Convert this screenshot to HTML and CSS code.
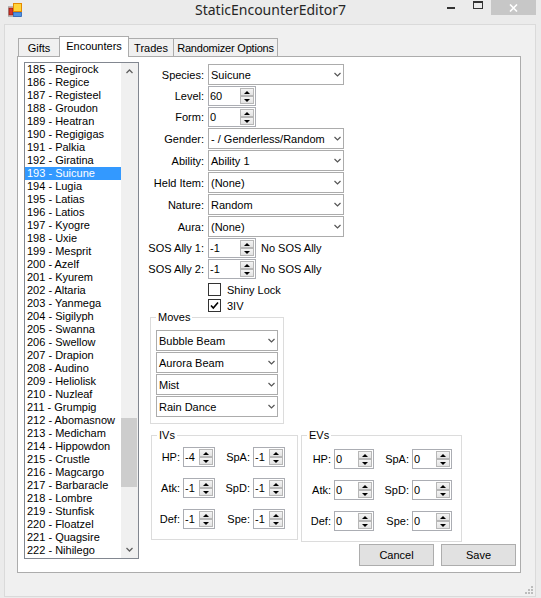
FILE: index.html
```html
<!DOCTYPE html>
<html>
<head>
<meta charset="utf-8">
<title>StaticEncounterEditor7</title>
<link rel="stylesheet" href="styles.css">
</head>
<body>
<div class="window">
  <div class="titlebar">
    <svg class="appicon" width="14" height="14" viewBox="0 0 14 14">
      <rect x="0.5" y="3.5" width="12" height="10" fill="#e9e9e9" stroke="#b5b5b5"/>
      <rect x="1" y="5" width="4" height="7" fill="#d8352a" stroke="#8d1e16" stroke-width="0.8"/>
      <rect x="5.5" y="0.5" width="8" height="8" fill="#ffd43a" stroke="#e58a00"/>
      <rect x="5.5" y="9.5" width="8" height="4" fill="#4f92e3" stroke="#2b62b3" stroke-width="0.8"/>
    </svg>
    <div class="title">StaticEncounterEditor7</div>
    <div class="controls">
      <span class="min"></span>
      <span class="max"></span>
      <span class="close"><svg width="9" height="8" viewBox="0 0 9 8"><path d="M1 0.5 L8 7.5 M8 0.5 L1 7.5" stroke="#fff" stroke-width="1.6"/></svg></span>
    </div>
  </div>

  <div class="client">
    <div class="tabs">
      <div class="tab t-gifts">Gifts</div>
      <div class="tab t-enc active">Encounters</div>
      <div class="tab t-trades">Trades</div>
      <div class="tab t-rand">Randomizer Options</div>
    </div>

    <div class="page">
      <div class="listbox">
        <div class="items">
          <div class="item">185 - Regirock</div>
          <div class="item">186 - Regice</div>
          <div class="item">187 - Registeel</div>
          <div class="item">188 - Groudon</div>
          <div class="item">189 - Heatran</div>
          <div class="item">190 - Regigigas</div>
          <div class="item">191 - Palkia</div>
          <div class="item">192 - Giratina</div>
          <div class="item sel">193 - Suicune</div>
          <div class="item">194 - Lugia</div>
          <div class="item">195 - Latias</div>
          <div class="item">196 - Latios</div>
          <div class="item">197 - Kyogre</div>
          <div class="item">198 - Uxie</div>
          <div class="item">199 - Mesprit</div>
          <div class="item">200 - Azelf</div>
          <div class="item">201 - Kyurem</div>
          <div class="item">202 - Altaria</div>
          <div class="item">203 - Yanmega</div>
          <div class="item">204 - Sigilyph</div>
          <div class="item">205 - Swanna</div>
          <div class="item">206 - Swellow</div>
          <div class="item">207 - Drapion</div>
          <div class="item">208 - Audino</div>
          <div class="item">209 - Heliolisk</div>
          <div class="item">210 - Nuzleaf</div>
          <div class="item">211 - Grumpig</div>
          <div class="item">212 - Abomasnow</div>
          <div class="item">213 - Medicham</div>
          <div class="item">214 - Hippowdon</div>
          <div class="item">215 - Crustle</div>
          <div class="item">216 - Magcargo</div>
          <div class="item">217 - Barbaracle</div>
          <div class="item">218 - Lombre</div>
          <div class="item">219 - Stunfisk</div>
          <div class="item">220 - Floatzel</div>
          <div class="item">221 - Quagsire</div>
          <div class="item">222 - Nihilego</div>
        </div>
        <div class="vscroll">
          <div class="sb-btn"><svg width="7" height="5" viewBox="0 0 7 5"><path d="M0.5 4 L3.5 1 L6.5 4" fill="none" stroke="#606060" stroke-width="1.3"/></svg></div>
          <div class="sb-track"><div class="sb-thumb"></div></div>
          <div class="sb-btn"><svg width="7" height="5" viewBox="0 0 7 5"><path d="M0.5 1 L3.5 4 L6.5 1" fill="none" stroke="#606060" stroke-width="1.3"/></svg></div>
        </div>
      </div>

      <div class="form">
        <div class="fields">
          <span class="lbl">Species:</span>
          <div class="combo w136"><span>Suicune</span><svg class="chev" width="7" height="5" viewBox="0 0 7 5"><path d="M0.5 1 L3.5 4 L6.5 1" fill="none" stroke="#555" stroke-width="1.2"/></svg></div>

          <span class="lbl">Level:</span>
          <div class="num w48"><span class="v">60</span><span class="spin"><b class="up"></b><b class="dn"></b></span></div>

          <span class="lbl">Form:</span>
          <div class="num w48"><span class="v">0</span><span class="spin"><b class="up"></b><b class="dn"></b></span></div>

          <span class="lbl">Gender:</span>
          <div class="combo w136"><span>- / Genderless/Random</span><svg class="chev" width="7" height="5" viewBox="0 0 7 5"><path d="M0.5 1 L3.5 4 L6.5 1" fill="none" stroke="#555" stroke-width="1.2"/></svg></div>

          <span class="lbl">Ability:</span>
          <div class="combo w136"><span>Ability 1</span><svg class="chev" width="7" height="5" viewBox="0 0 7 5"><path d="M0.5 1 L3.5 4 L6.5 1" fill="none" stroke="#555" stroke-width="1.2"/></svg></div>

          <span class="lbl">Held Item:</span>
          <div class="combo w136"><span>(None)</span><svg class="chev" width="7" height="5" viewBox="0 0 7 5"><path d="M0.5 1 L3.5 4 L6.5 1" fill="none" stroke="#555" stroke-width="1.2"/></svg></div>

          <span class="lbl">Nature:</span>
          <div class="combo w136"><span>Random</span><svg class="chev" width="7" height="5" viewBox="0 0 7 5"><path d="M0.5 1 L3.5 4 L6.5 1" fill="none" stroke="#555" stroke-width="1.2"/></svg></div>

          <span class="lbl">Aura:</span>
          <div class="combo w136"><span>(None)</span><svg class="chev" width="7" height="5" viewBox="0 0 7 5"><path d="M0.5 1 L3.5 4 L6.5 1" fill="none" stroke="#555" stroke-width="1.2"/></svg></div>

          <span class="lbl">SOS Ally 1:</span>
          <div class="sos"><div class="num w48"><span class="v">-1</span><span class="spin"><b class="up"></b><b class="dn"></b></span></div><span>No SOS Ally</span></div>

          <span class="lbl">SOS Ally 2:</span>
          <div class="sos"><div class="num w48"><span class="v">-1</span><span class="spin"><b class="up"></b><b class="dn"></b></span></div><span>No SOS Ally</span></div>

          <div class="check first"><span class="box"></span>Shiny Lock</div>
          <div class="check second"><span class="box"><svg width="11" height="11" viewBox="0 0 11 11"><path d="M2 5.5 L4.3 8 L9 2.5" fill="none" stroke="#000" stroke-width="1.6"/></svg></span>3IV</div>
        </div>

        <fieldset class="grp moves">
          <legend>Moves</legend>
          <div class="mlist">
            <div class="combo"><span>Bubble Beam</span><svg class="chev" width="7" height="5" viewBox="0 0 7 5"><path d="M0.5 1 L3.5 4 L6.5 1" fill="none" stroke="#555" stroke-width="1.2"/></svg></div>
            <div class="combo"><span>Aurora Beam</span><svg class="chev" width="7" height="5" viewBox="0 0 7 5"><path d="M0.5 1 L3.5 4 L6.5 1" fill="none" stroke="#555" stroke-width="1.2"/></svg></div>
            <div class="combo"><span>Mist</span><svg class="chev" width="7" height="5" viewBox="0 0 7 5"><path d="M0.5 1 L3.5 4 L6.5 1" fill="none" stroke="#555" stroke-width="1.2"/></svg></div>
            <div class="combo"><span>Rain Dance</span><svg class="chev" width="7" height="5" viewBox="0 0 7 5"><path d="M0.5 1 L3.5 4 L6.5 1" fill="none" stroke="#555" stroke-width="1.2"/></svg></div>
          </div>
        </fieldset>

        <div class="stats">
          <fieldset class="grp ivs">
            <legend>IVs</legend>
            <div class="statgrid">
              <span class="sl">HP:</span><div class="num"><span class="v">-4</span><span class="spin"><b class="up"></b><b class="dn"></b></span></div>
              <span class="sl">SpA:</span><div class="num"><span class="v">-1</span><span class="spin"><b class="up"></b><b class="dn"></b></span></div>
              <span class="sl">Atk:</span><div class="num"><span class="v">-1</span><span class="spin"><b class="up"></b><b class="dn"></b></span></div>
              <span class="sl">SpD:</span><div class="num"><span class="v">-1</span><span class="spin"><b class="up"></b><b class="dn"></b></span></div>
              <span class="sl">Def:</span><div class="num"><span class="v">-1</span><span class="spin"><b class="up"></b><b class="dn"></b></span></div>
              <span class="sl">Spe:</span><div class="num"><span class="v">-1</span><span class="spin"><b class="up"></b><b class="dn"></b></span></div>
            </div>
          </fieldset>
          <fieldset class="grp evs">
            <legend>EVs</legend>
            <div class="statgrid">
              <span class="sl">HP:</span><div class="num"><span class="v">0</span><span class="spin"><b class="up"></b><b class="dn"></b></span></div>
              <span class="sl">SpA:</span><div class="num"><span class="v">0</span><span class="spin"><b class="up"></b><b class="dn"></b></span></div>
              <span class="sl">Atk:</span><div class="num"><span class="v">0</span><span class="spin"><b class="up"></b><b class="dn"></b></span></div>
              <span class="sl">SpD:</span><div class="num"><span class="v">0</span><span class="spin"><b class="up"></b><b class="dn"></b></span></div>
              <span class="sl">Def:</span><div class="num"><span class="v">0</span><span class="spin"><b class="up"></b><b class="dn"></b></span></div>
              <span class="sl">Spe:</span><div class="num"><span class="v">0</span><span class="spin"><b class="up"></b><b class="dn"></b></span></div>
            </div>
          </fieldset>
        </div>

        <div class="buttons">
          <div class="btn">Cancel</div>
          <div class="btn">Save</div>
        </div>
      </div>
    </div>

    <svg class="grip" width="8" height="8" viewBox="0 0 8 8">
      <rect x="6" y="0" width="2" height="2" fill="#bcbcbc"/>
      <rect x="3" y="3" width="2" height="2" fill="#bcbcbc"/>
      <rect x="6" y="3" width="2" height="2" fill="#bcbcbc"/>
      <rect x="0" y="6" width="2" height="2" fill="#bcbcbc"/>
      <rect x="3" y="6" width="2" height="2" fill="#bcbcbc"/>
      <rect x="6" y="6" width="2" height="2" fill="#bcbcbc"/>
    </svg>
  </div>
</div>
</body>
</html>
```

FILE: styles.css
```css
* { box-sizing: border-box; }
html, body { margin: 0; padding: 0; }
body {
  width: 541px;
  height: 598px;
  overflow: hidden;
  background: #ebebeb;
  font-family: "Liberation Sans", Arial, sans-serif;
  font-size: 11px;
  color: #000;
}
.window { display: flex; flex-direction: column; height: 598px; }

/* title bar */
.titlebar {
  height: 24px;
  flex: none;
  display: grid;
  grid-template-columns: 1fr auto 1fr;
  align-items: start;
}
.appicon { margin: 3px 0 0 8px; display: block; }
.title {
  font-family: "Noto Sans", sans-serif;
  font-size: 14px;
  line-height: 19px;
  color: #262626;
}
.controls { display: flex; justify-content: flex-end; align-items: flex-start; padding-right: 5px; }
.min { width: 8px; height: 2px; background: #333; margin-top: 7px; }
.max { width: 10px; height: 8px; border: 1px solid #333; border-top-width: 2px; margin: 1px 0 0 18px; }
.close {
  width: 45px; height: 15px; margin-left: 8px;
  background: #c7c7c7;
  display: flex; align-items: center; justify-content: center;
}

/* client */
.client {
  position: relative;
  margin: 0 5px 0 4px;
  height: 573px;
  border: 1px solid #dadada;
  background: #f0f0f0;
  padding: 11px 0 0 12px;
}
.grip { position: absolute; right: 2px; bottom: 2px; }

/* tabs */
.tabs { display: flex; align-items: flex-end; height: 20px; padding-left: 1px; }
.tab {
  height: 18px;
  border: 1px solid #acacac;
  border-bottom: 0;
  margin-right: -1px;
  background: #f0f0f0;
  display: flex; align-items: center; justify-content: center;
  white-space: nowrap;
}
.tab.active {
  height: 21px;
  margin-bottom: -1px;
  background: #fff;
  position: relative;
  z-index: 1;
  padding-bottom: 2px;
}
.t-gifts { width: 42px; }
.t-enc { width: 70px; }
.t-trades { width: 46px; }
.t-rand { width: 105px; letter-spacing: -0.2px; }

/* page */
.page {
  width: 504px;
  height: 517px;
  border: 1px solid #acacac;
  background: #fff;
  display: flex;
  align-items: flex-start;
  padding: 5px 0 0 6px;
}

/* listbox */
.listbox {
  flex: none;
  width: 115px;
  height: 497px;
  border: 1px solid #828790;
  display: flex;
  overflow: hidden;
}
.items { flex: 1; min-width: 0; }
.item { height: 13px; line-height: 13px; padding-left: 2px; white-space: nowrap; }
.item.sel { background: #3399ff; color: #fff; }
.vscroll { width: 17px; flex: none; background: #f0f0f0; display: flex; flex-direction: column; }
.sb-btn { height: 17px; flex: none; display: flex; align-items: center; justify-content: center; }
.sb-track { flex: 1; }
.sb-thumb { margin: 338px 1px 0 0; height: 69px; background: #cdcdcd; }

/* form */
.form { flex: none; width: 370px; margin: 2px 0 0 7px; display: flex; flex-direction: column; }
.fields {
  display: grid;
  grid-template-columns: 58px auto;
  column-gap: 4px;
  row-gap: 1px;
  align-items: center;
  justify-items: start;
}
.lbl { justify-self: end; white-space: nowrap; }

.combo {
  display: flex;
  align-items: center;
  justify-content: space-between;
  height: 21px;
  border: 1px solid #acacac;
  background: #fff;
  padding: 0 2px 0 2px;
  white-space: nowrap;
}
.w136 { width: 136px; }
.chev { display: block; flex: none; }

.num {
  display: flex;
  align-items: center;
  height: 20px;
  border: 1px solid #abadb3;
  background: #fff;
  padding-left: 1px;
}
.w48 { width: 48px; }
.num .v { flex: 1; white-space: nowrap; }
.spin { width: 14px; height: 16px; margin-right: 1px; display: flex; flex-direction: column; flex: none; }
.spin b {
  flex: 1;
  border: 1px solid #b7b7b7;
  background: linear-gradient(#f4f4f4, #e3e3e3);
  display: flex; align-items: center; justify-content: center;
}
.spin b::after { content: ""; width: 0; height: 0; border-left: 3px solid transparent; border-right: 3px solid transparent; }
.spin .up::after { border-bottom: 3px solid #000; }
.spin .dn::after { border-top: 3px solid #000; }

.sos { display: flex; align-items: center; gap: 5px; white-space: nowrap; }

.check { grid-column: 2; display: flex; align-items: center; height: 13px; white-space: nowrap; }
.check.first { margin-top: 3px; }
.check.second { margin-top: 2px; }
.box {
  width: 13px; height: 13px;
  border: 1px solid #333;
  background: #fff;
  margin-right: 6px;
  display: flex; align-items: center; justify-content: center;
}

/* group boxes */
.grp {
  border: 1px solid #dcdcdc;
  margin: 0;
  min-width: 0;
  padding: 0;
}
.grp legend {
  font-size: 11px;
  line-height: 11px;
  padding: 0 2px;
  margin-left: 5px;
}
.moves { margin-left: 4px; width: 134px; padding: 7px 0 6px; }
.mlist { margin: 0 5px; display: flex; flex-direction: column; gap: 1px; }

.stats { display: flex; align-items: flex-start; margin-top: 6px; }
.ivs { margin-left: 5px; width: 147px; padding: 6px 0 10px; }
.evs { margin-left: 3px; width: 161px; padding: 8px 0 10px; }
.statgrid { display: grid; row-gap: 11px; align-items: center; }
.ivs .statgrid { grid-template-columns: 31px 32px 38px 32px; }
.evs .statgrid { grid-template-columns: 32px 40px 38px 40px; }
.sl { text-align: right; padding-right: 3px; white-space: nowrap; }
.statgrid .num { width: 100%; }

/* buttons */
.buttons { display: flex; justify-content: flex-end; gap: 7px; margin-top: 2px; }
.btn {
  width: 75px; height: 22px;
  border: 1px solid #adadad;
  background: #e1e1e1;
  display: flex; align-items: center; justify-content: center;
}
```
